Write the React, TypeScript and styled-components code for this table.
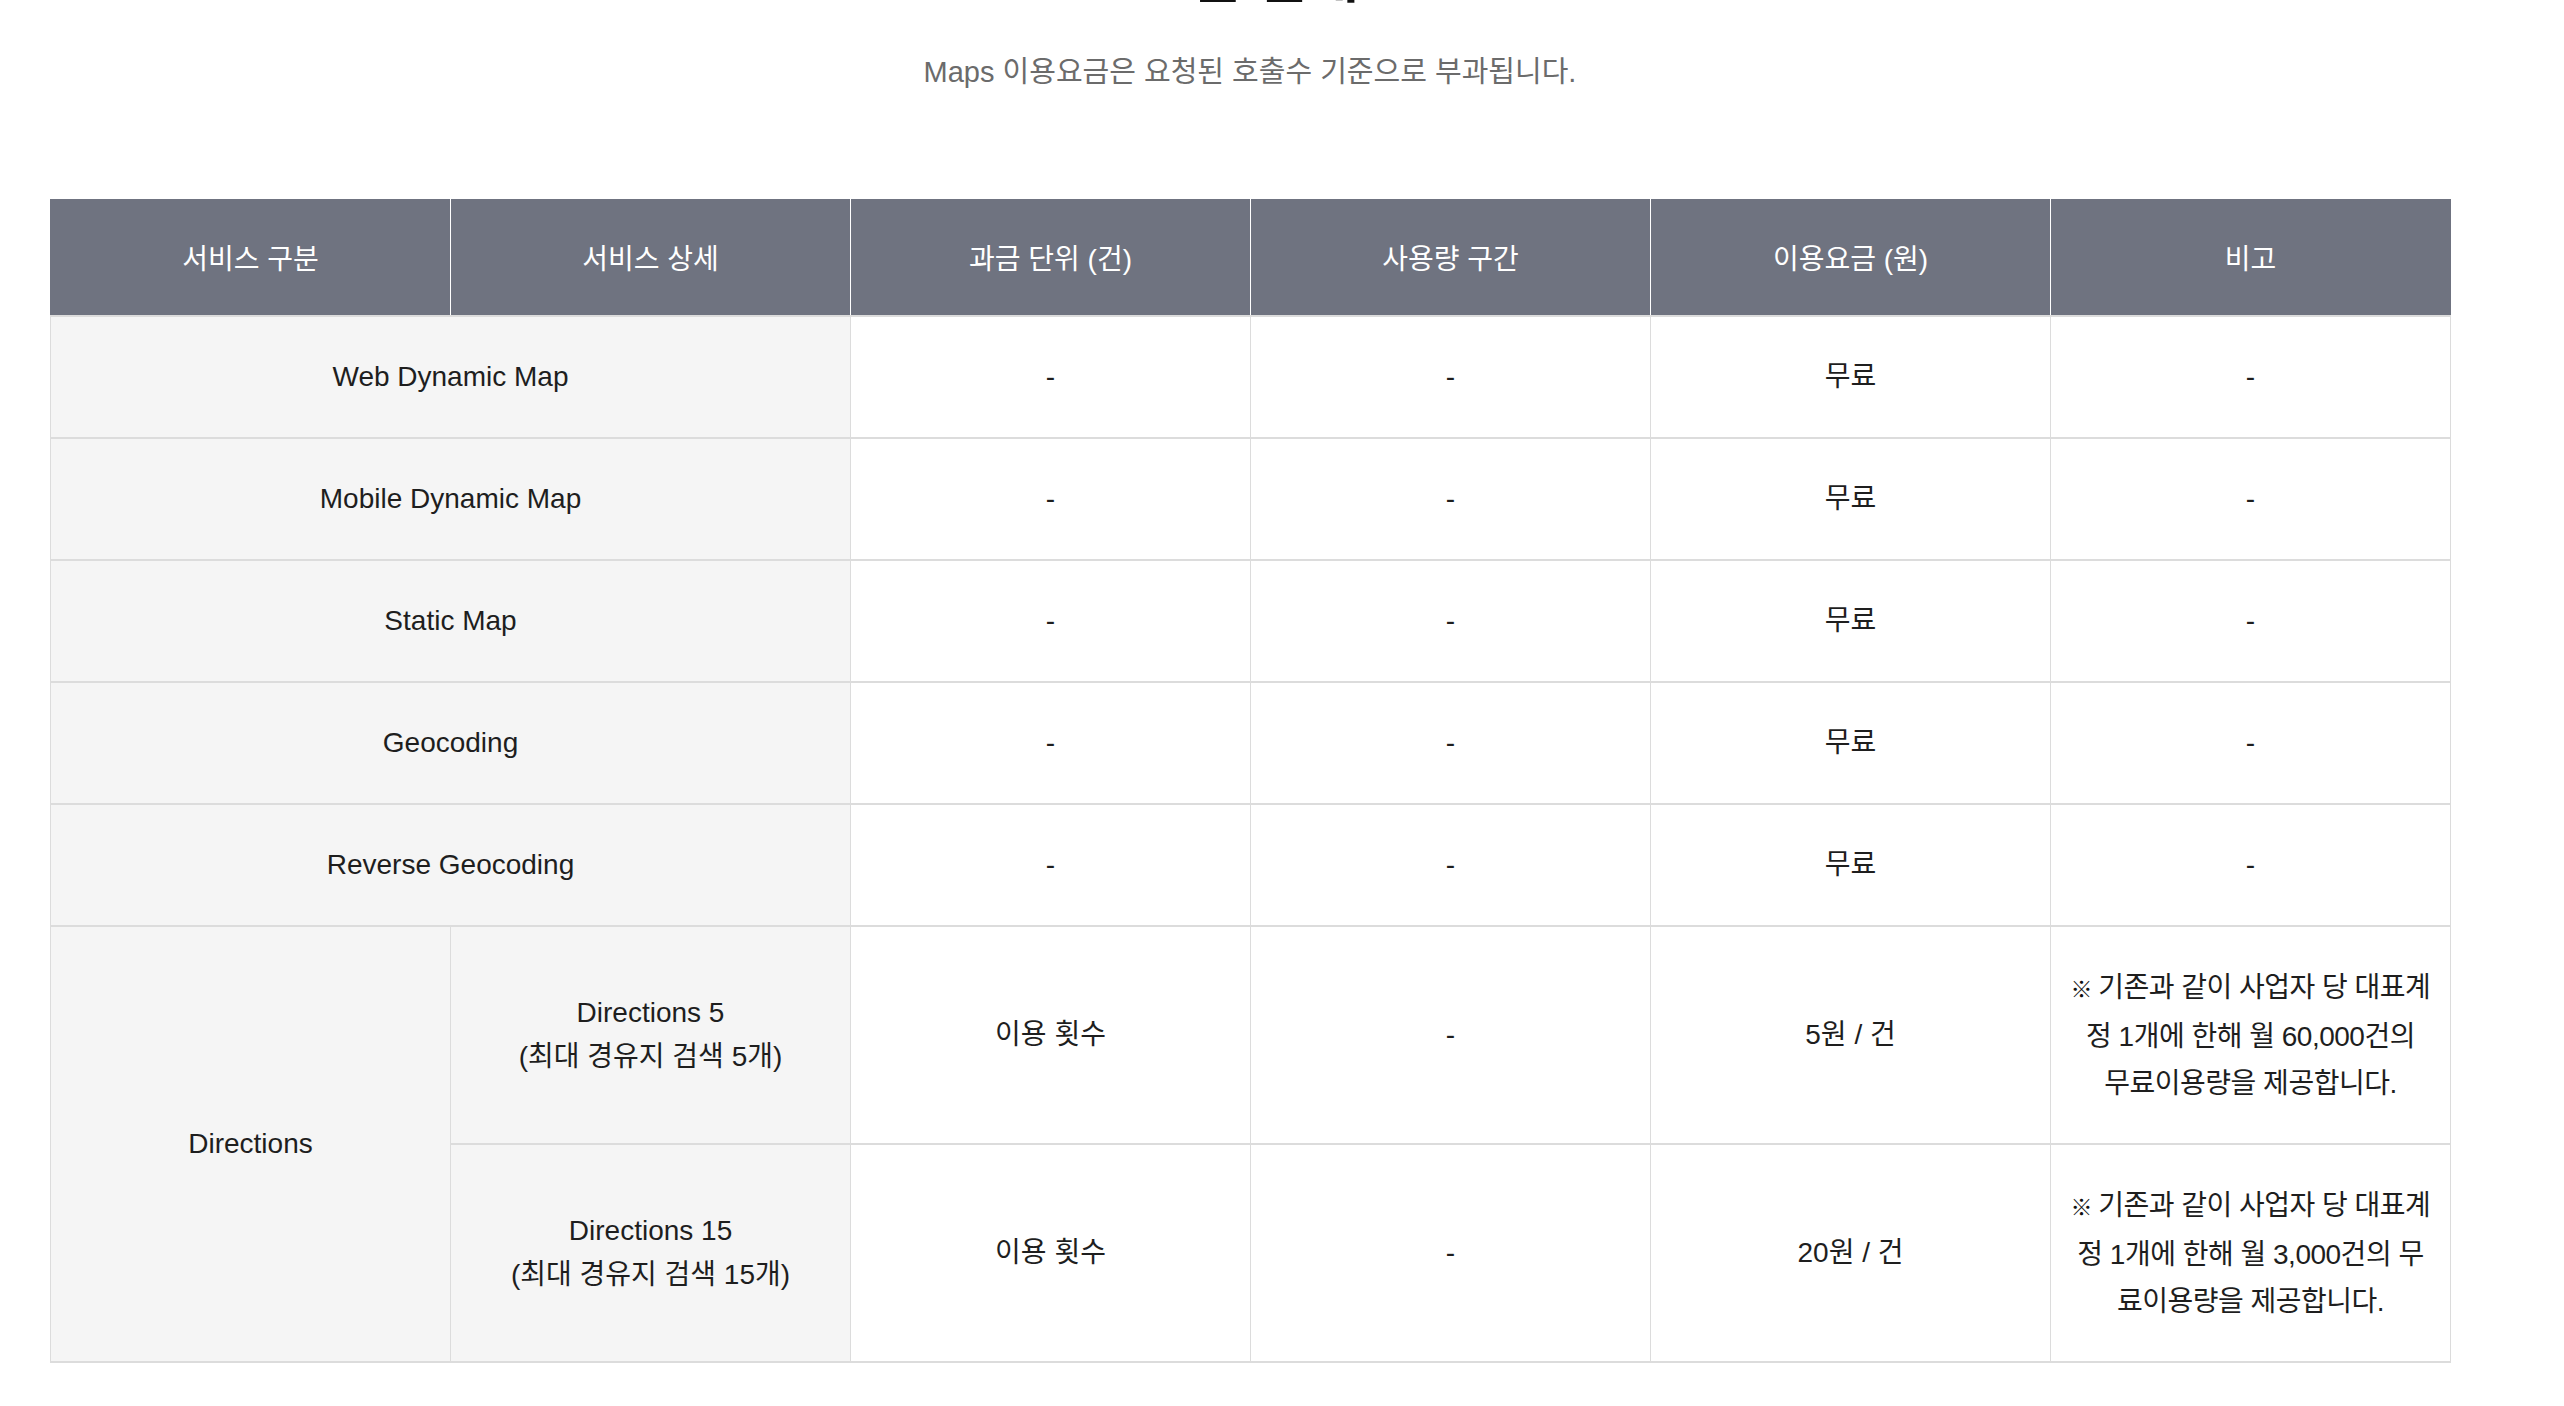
import React from "react";
import styled, { createGlobalStyle } from "styled-components";

const GlobalStyle = createGlobalStyle`
  html, body {
    margin: 0;
    padding: 0;
    background: #ffffff;
  }
  body {
    font-family: "Liberation Sans", "Noto Sans CJK KR", sans-serif;
    color: #222222;
  }
`;

const Page = styled.div`
  width: 2400px;
  margin-left: 50px;
  overflow: visible;
`;

const Title = styled.h2`
  margin: -50px 0 0;
  font-size: 56px;
  line-height: 56px;
  font-weight: 700;
  color: #111111;
  text-align: center;
  letter-spacing: -1px;
`;

const Subtitle = styled.p`
  margin: 46px 0 0;
  font-size: 29px;
  line-height: 40px;
  color: #6b6b6b;
  text-align: center;
`;

const Table = styled.table`
  margin-top: 107px;
  width: 2400px;
  table-layout: fixed;
  border-collapse: collapse;
  font-size: 28px;
`;

const HeadCell = styled.th`
  height: 116px;
  padding: 0;
  background: #6f7380;
  color: #ffffff;
  font-weight: 400;
  text-align: center;
  vertical-align: middle;
  border-left: 1px solid #ffffff;
  border-right: 1px solid #ffffff;

  &:first-child {
    border-left-color: #6f7380;
  }
  &:last-child {
    border-right-color: #6f7380;
  }
`;

const Row = styled.tr<{ $h: number }>`
  height: ${(p) => p.$h}px;
`;

const Cell = styled.td<{ $shade?: boolean }>`
  padding: 0 6px;
  background: ${(p) => (p.$shade ? "#f5f5f5" : "#ffffff")};
  color: #1e1e1e;
  text-align: center;
  vertical-align: middle;
  line-height: 44px;
  border-style: solid;
  border-color: #dcdcdc;
  border-width: 2px 1px;
`;

const Line = styled.span`
  display: block;
  white-space: nowrap;
`;

const Remark = styled.div`
  line-height: 47px;
  letter-spacing: -0.5px;
`;

const Mark = styled.span`
  font-size: 22px;
  font-weight: 700;
  color: #111111;
  margin-right: 6px;
`;

type Simple = { name: string };

const simpleRows: Simple[] = [
  { name: "Web Dynamic Map" },
  { name: "Mobile Dynamic Map" },
  { name: "Static Map" },
  { name: "Geocoding" },
  { name: "Reverse Geocoding" },
];

const heads = ["서비스 구분", "서비스 상세", "과금 단위 (건)", "사용량 구간", "이용요금 (원)", "비고"];

export default function App() {
  return (
    <Page>
      <GlobalStyle />
      <Title>요금 안내</Title>
      <Subtitle>Maps 이용요금은 요청된 호출수 기준으로 부과됩니다.</Subtitle>

      <Table>
        <colgroup>
          {heads.map((h) => (
            <col key={h} style={{ width: "400px" }} />
          ))}
        </colgroup>
        <thead>
          <tr>
            {heads.map((h) => (
              <HeadCell key={h}>{h}</HeadCell>
            ))}
          </tr>
        </thead>
        <tbody>
          {simpleRows.map((r) => (
            <Row $h={122} key={r.name}>
              <Cell $shade colSpan={2}>
                {r.name}
              </Cell>
              <Cell>-</Cell>
              <Cell>-</Cell>
              <Cell>무료</Cell>
              <Cell>-</Cell>
            </Row>
          ))}
          <Row $h={218}>
            <Cell $shade rowSpan={2}>
              Directions
            </Cell>
            <Cell $shade>
              <Line>Directions 5</Line>
              <Line>(최대 경유지 검색 5개)</Line>
            </Cell>
            <Cell>이용 횟수</Cell>
            <Cell>-</Cell>
            <Cell>5원 / 건</Cell>
            <Cell>
              <Remark>
                <Line>
                  <Mark>※</Mark>기존과 같이 사업자 당 대표계
                </Line>
                <Line>정 1개에 한해 월 60,000건의</Line>
                <Line>무료이용량을 제공합니다.</Line>
              </Remark>
            </Cell>
          </Row>
          <Row $h={218}>
            <Cell $shade>
              <Line>Directions 15</Line>
              <Line>(최대 경유지 검색 15개)</Line>
            </Cell>
            <Cell>이용 횟수</Cell>
            <Cell>-</Cell>
            <Cell>20원 / 건</Cell>
            <Cell>
              <Remark>
                <Line>
                  <Mark>※</Mark>기존과 같이 사업자 당 대표계
                </Line>
                <Line>정 1개에 한해 월 3,000건의 무</Line>
                <Line>료이용량을 제공합니다.</Line>
              </Remark>
            </Cell>
          </Row>
        </tbody>
      </Table>
    </Page>
  );
}
